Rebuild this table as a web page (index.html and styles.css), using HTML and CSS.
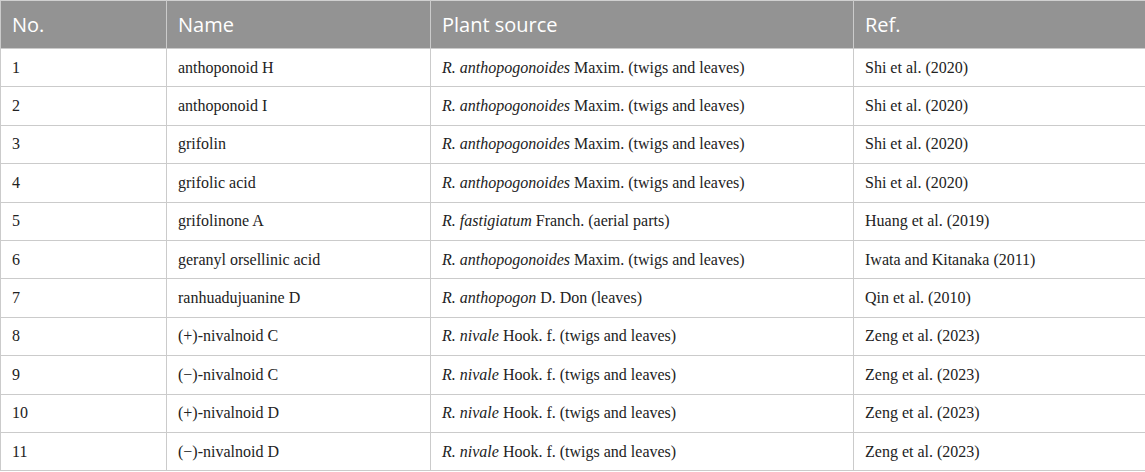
FILE: index.html
```html
<!DOCTYPE html>
<html>
<head>
<meta charset="utf-8">
<link rel="stylesheet" href="styles.css">
</head>
<body>
<table class="data">
  <colgroup>
    <col class="c1"><col class="c2"><col class="c3"><col class="c4">
  </colgroup>
  <thead>
    <tr><th>No.</th><th>Name</th><th>Plant source</th><th>Ref.</th></tr>
  </thead>
  <tbody>
    <tr><td>1</td><td>anthoponoid H</td><td><i>R. anthopogonoides</i> Maxim. (twigs and leaves)</td><td>Shi et al. (2020)</td></tr>
    <tr><td>2</td><td>anthoponoid I</td><td><i>R. anthopogonoides</i> Maxim. (twigs and leaves)</td><td>Shi et al. (2020)</td></tr>
    <tr><td>3</td><td>grifolin</td><td><i>R. anthopogonoides</i> Maxim. (twigs and leaves)</td><td>Shi et al. (2020)</td></tr>
    <tr><td>4</td><td>grifolic acid</td><td><i>R. anthopogonoides</i> Maxim. (twigs and leaves)</td><td>Shi et al. (2020)</td></tr>
    <tr><td>5</td><td>grifolinone A</td><td><i>R. fastigiatum</i> Franch. (aerial parts)</td><td>Huang et al. (2019)</td></tr>
    <tr><td>6</td><td>geranyl orsellinic acid</td><td><i>R. anthopogonoides</i> Maxim. (twigs and leaves)</td><td>Iwata and Kitanaka (2011)</td></tr>
    <tr><td>7</td><td>ranhuadujuanine D</td><td><i>R. anthopogon</i> D. Don (leaves)</td><td>Qin et al. (2010)</td></tr>
    <tr><td>8</td><td>(+)-nivalnoid C</td><td><i>R. nivale</i> Hook. f. (twigs and leaves)</td><td>Zeng et al. (2023)</td></tr>
    <tr><td>9</td><td>(−)-nivalnoid C</td><td><i>R. nivale</i> Hook. f. (twigs and leaves)</td><td>Zeng et al. (2023)</td></tr>
    <tr><td>10</td><td>(+)-nivalnoid D</td><td><i>R. nivale</i> Hook. f. (twigs and leaves)</td><td>Zeng et al. (2023)</td></tr>
    <tr><td>11</td><td>(−)-nivalnoid D</td><td><i>R. nivale</i> Hook. f. (twigs and leaves)</td><td>Zeng et al. (2023)</td></tr>
  </tbody>
</table>
</body>
</html>
```
FILE: styles.css
```css
html, body {
  margin: 0;
  padding: 0;
  background: #ffffff;
}
.data {
  border-collapse: collapse;
  table-layout: fixed;
  width: 1145px;
}
.c1 { width: 166px; }
.c2 { width: 264px; }
.c3 { width: 423px; }
.c4 { width: 292px; }
.data th, .data td {
  border: 1px solid #cbcbcb;
  text-align: left;
  padding: 0 11px;
  white-space: nowrap;
}
.data th {
  background: #939393;
  color: #ffffff;
  font-family: "Open Sans", sans-serif;
  font-weight: 400;
  font-size: 20px;
  height: 47px;
  border-top-color: #d0d0d0;
}
.data td {
  font-family: "Liberation Serif", serif;
  font-size: 16px;
  color: #222222;
  height: 37.4px;
}
```
